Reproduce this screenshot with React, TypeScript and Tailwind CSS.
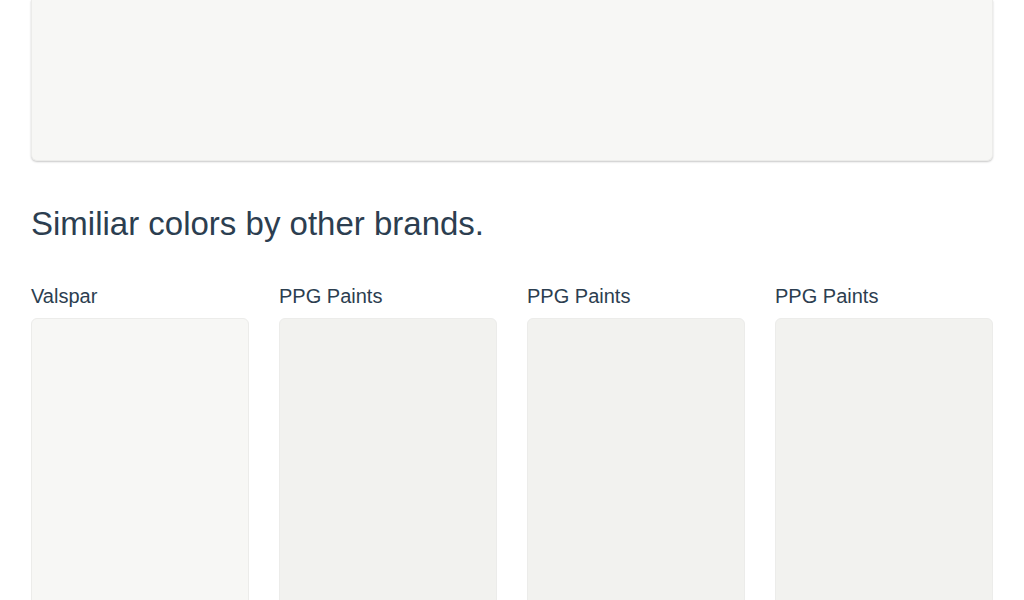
import React from "react";

const BRANDS = [
  { name: "Valspar", hex: "#f7f7f5" },
  { name: "PPG Paints", hex: "#f2f2ef" },
  { name: "PPG Paints", hex: "#f2f2ef" },
  { name: "PPG Paints", hex: "#f2f2ef" },
];

export default function App() {
  return (
    <div className="h-[600px] overflow-hidden bg-white px-[31px] font-['Liberation_Sans',Arial,sans-serif] text-[#2c3e50]">
      {/* main swatch */}
      <div className="h-[161px] rounded-b-md border border-t-0 border-[#ececea] bg-[#f7f7f5] shadow-[0_1px_2px_rgba(0,0,0,0.22)]" />

      <h2 className="mt-[44px] text-[33px] leading-[38px]">Similiar colors by other brands.</h2>

      <div className="mt-[42px] grid grid-cols-4 gap-[30px]">
        {BRANDS.map((b, i) => (
          <div key={i}>
            <div className="text-[20px] leading-[23px]">{b.name}</div>
            <div
              className="mt-[10px] h-[320px] rounded-md border border-[#ececea]"
              style={{ backgroundColor: b.hex }}
            />
          </div>
        ))}
      </div>
    </div>
  );
}
